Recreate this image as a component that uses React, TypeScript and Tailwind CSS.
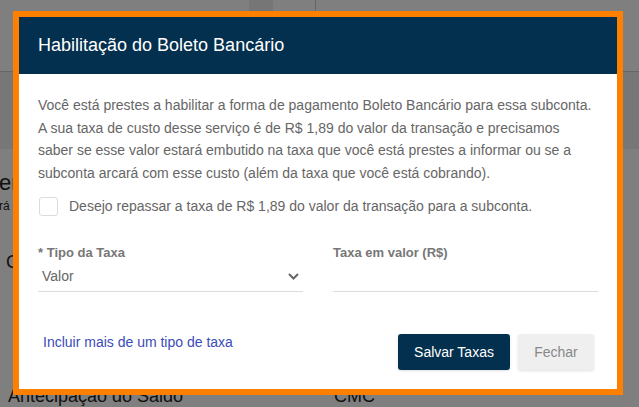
import React from 'react';

const font = { fontFamily: '"Liberation Sans", Arial, sans-serif' };

const BackgroundPage: React.FC = () => (
  <div className="flex h-full flex-col bg-white text-[#222]">
    <div className="flex h-[72px] border-b border-[#ccc]">
      <div className="w-[249px]" />
      <div className="w-[24px] bg-[#ececec]" />
      <div className="w-[42px]" />
      <div className="w-px bg-[#ccc]" />
      <div className="flex-1" />
    </div>
    <div className="h-[77px] bg-[#eeeeee]" />
    <div className="flex flex-col pt-[20px]">
      <p className="-ml-[1px] text-[22px] leading-[28px]">en</p>
      <p className="mt-[2px] -ml-[1px] text-[12px] leading-[14px]">rá</p>
      <p className="mt-[38px] pl-[6px] text-[18px] leading-[22px]">C</p>
    </div>
    <div className="mt-auto flex text-[18px] leading-[22px]">
      <span className="w-[334px] pl-[8px]">Antecipação do Saldo</span>
      <span>CMC</span>
    </div>
  </div>
);

const Modal: React.FC = () => (
  <div className="flex h-full flex-col border-[6px] border-[#ff8000] bg-white">
    <div className="flex h-[57px] items-center bg-[#03304e] px-[19px]">
      <h2 className="text-[18px] text-white">Habilitação do Boleto Bancário</h2>
    </div>

    <div className="flex flex-1 flex-col px-[19px] pt-[20px] pb-[19px]">
      <p className="text-[14px] leading-[22.5px] text-[#666]">
        Você está prestes a habilitar a forma de pagamento Boleto Bancário para essa subconta. A sua taxa de custo
        desse serviço é de R$ 1,89 do valor da transação e precisamos saber se esse valor estará embutido na taxa
        que você está prestes a informar ou se a subconta arcará com esse custo (além da taxa que você está
        cobrando).
      </p>

      <label className="mt-[12px] flex items-center gap-[11px]">
        <span className="ml-[1px] h-[19px] w-[19px] rounded-[3px] border border-[#dcdcdc] bg-white" />
        <span className="text-[14px] text-[#666]">
          Desejo repassar a taxa de R$ 1,89 do valor da transação para a subconta.
        </span>
      </label>

      <div className="mt-[26px] grid grid-cols-2 gap-[30px]">
        <div className="flex flex-col">
          <span className="text-[13px] font-bold text-[#777]">* Tipo da Taxa</span>
          <div className="mt-[4px] flex h-[25px] items-center justify-between border-b border-[#dcdcdc] pr-[4px] pb-[4px] pl-[4px]">
            <span className="text-[14px] text-[#666]">Valor</span>
            <svg width="11" height="7" viewBox="0 0 11 7" fill="none">
              <path d="M1 1l4.5 4.5L10 1" stroke="#666" strokeWidth="2" />
            </svg>
          </div>
        </div>
        <div className="flex flex-col">
          <span className="text-[13px] font-bold text-[#777]">Taxa em valor (R$)</span>
          <div className="mt-[4px] h-[25px] border-b border-[#dcdcdc]" />
        </div>
      </div>

      <div className="mt-auto flex items-end justify-between">
        <a className="mb-[17px] pl-[5px] text-[14px] text-[#3b4cb8]">Incluir mais de um tipo de taxa</a>
        <div className="flex gap-[8px] pr-[4px]">
          <button className="h-[36px] w-[112px] rounded-[3px] bg-[#03304e] text-[14px] text-white shadow-sm">
            Salvar Taxas
          </button>
          <button className="h-[36px] w-[76px] rounded-[3px] bg-[#efefef] text-[14px] text-[#888] shadow-sm">
            Fechar
          </button>
        </div>
      </div>
    </div>
  </div>
);

const App: React.FC = () => (
  <div className="relative h-[407px] w-[639px] overflow-hidden" style={font}>
    <BackgroundPage />
    <div className="absolute inset-0 bg-black/50" />
    <div className="absolute left-[13px] top-[11px] h-[384px] w-[610px]">
      <Modal />
    </div>
  </div>
);

export default App;
